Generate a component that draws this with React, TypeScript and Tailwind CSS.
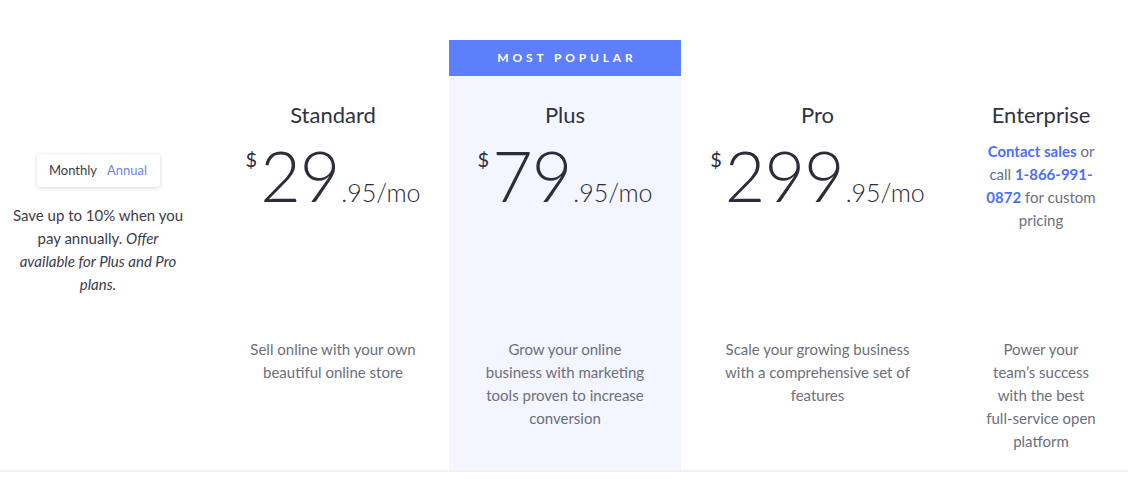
import React from "react";

const font = "font-['Lato','Open_Sans',sans-serif]";

function Price({ whole }: { whole: string }) {
  return (
    <div className="mt-[11px] flex justify-center items-start text-[#2c2c3a]">
      <span className="text-[20px] leading-none mt-[9px] mr-[3px]">$</span>
      <span className="flex items-baseline">
        <span className="text-[70px] leading-none font-light tracking-[-1px]">{whole}</span>
        <span className="text-[25px] leading-none font-light ml-[2px]">.95/mo</span>
      </span>
    </div>
  );
}

function Title({ children }: { children: React.ReactNode }) {
  return (
    <div className="pt-[25px] text-[22px] leading-[28px] text-[#31323f] text-center">{children}</div>
  );
}

function Desc({ children, w }: { children: React.ReactNode; w: string }) {
  return (
    <p className={`mx-auto text-center text-[15px] leading-[23px] text-[#6e6e7c] ${w}`}>{children}</p>
  );
}

export default function App() {
  return (
    <div className={`${font} bg-white w-[1147px] h-[479px] overflow-hidden`}>
      <div className="mt-10 w-[1128px] grid grid-cols-[217px_232px_232px_273px_174px] border-b-2 border-[#f0f0f6]">
        {/* left */}
        <div className="pr-[21px] pt-[114px] flex flex-col items-center">
          <div className="w-[123px] h-[33px] rounded-[3px] bg-white shadow-[0_1px_4px_rgba(0,0,0,0.16)] flex items-center justify-center gap-[10px] text-[13px]">
            <span className="text-[#3b3b48]">Monthly</span>
            <span className="text-[#6f86f0]">Annual</span>
          </div>
          <p className="mt-[17px] w-[172px] text-center text-[15px] leading-[23px] text-[#3c3c4a]">
            Save up to 10% when you pay annually. <em>Offer available for Plus and Pro plans.</em>
          </p>
        </div>

        {/* Standard */}
        <div className="pt-9 pb-[17px]">
          <div className="h-[262px]">
            <Title>Standard</Title>
            <Price whole="29" />
          </div>
          <Desc w="max-w-[168px]">Sell online with your own beautiful online store</Desc>
        </div>

        {/* Plus */}
        <div className="bg-[#f3f5ff] pb-[17px]">
          <div className="h-9 bg-[#5d7ffc] flex items-center justify-center text-white text-[12px] font-bold tracking-[0.32em] pl-[0.32em]">
            MOST POPULAR
          </div>
          <div className="h-[262px]">
            <Title>Plus</Title>
            <Price whole="79" />
          </div>
          <Desc w="max-w-[168px]">Grow your online business with marketing tools proven to increase conversion</Desc>
        </div>

        {/* Pro */}
        <div className="pt-9 pb-[17px]">
          <div className="h-[262px]">
            <Title>Pro</Title>
            <Price whole="299" />
          </div>
          <Desc w="max-w-[196px]">Scale your growing business with a comprehensive set of features</Desc>
        </div>

        {/* Enterprise */}
        <div className="pt-9 pb-[17px]">
          <div className="h-[262px]">
            <Title>Enterprise</Title>
            <p className="mt-[11px] mx-auto max-w-[120px] text-center text-[15px] leading-[23px] text-[#6e6e7c]">
              <span className="text-[#4d6ff8] font-bold">Contact sales</span> or call{" "}
              <span className="text-[#4d6ff8] font-bold">1-866-991-0872</span> for custom pricing
            </p>
          </div>
          <Desc w="max-w-[116px]">Power your team’s success with the best full-service open platform</Desc>
        </div>
      </div>
    </div>
  );
}
